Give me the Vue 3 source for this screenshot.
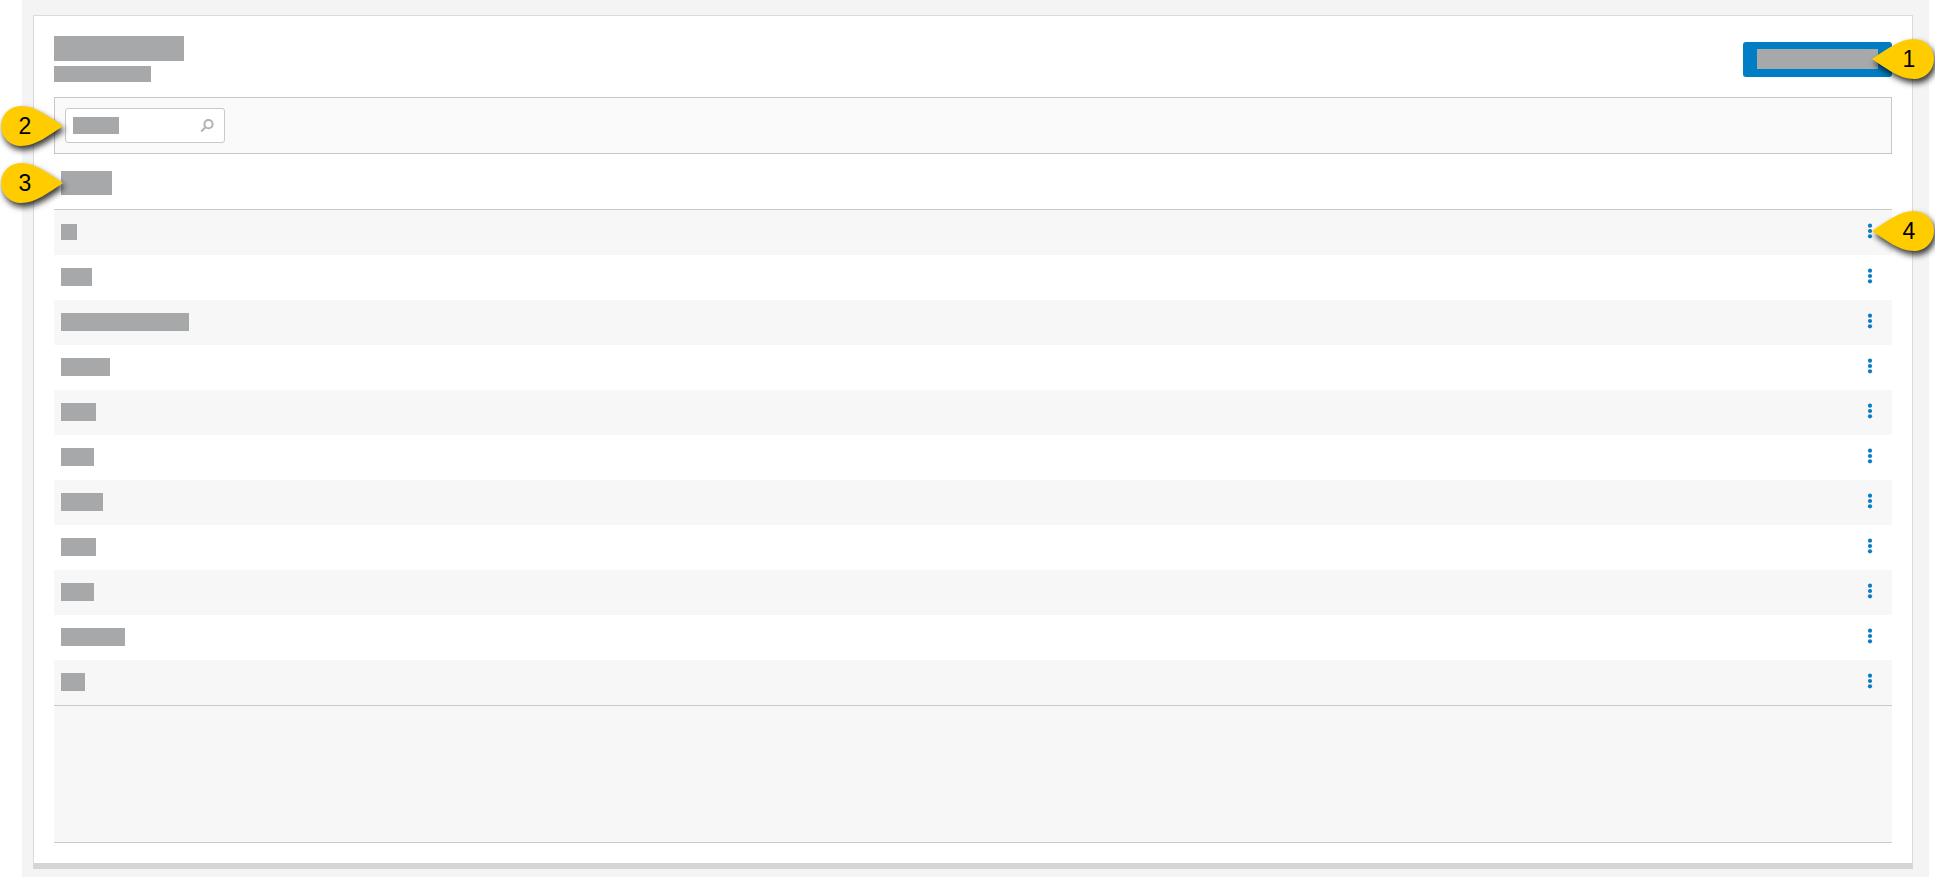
<script setup>
const rows = [16, 31, 128, 49, 35, 33, 42, 35, 33, 64, 24].map((width, i) => ({ id: i + 1, width }))
</script>

<template>
  <div class="page">
    <main class="panel">
      <header class="head">
        <div class="titles">
          <h1 class="block title" aria-label="Title"></h1>
          <p class="block subtitle"></p>
        </div>
        <div class="anchor">
          <button class="primary" type="button" aria-label="Create"><span class="block caption"></span></button>
          <div class="pin right">
            <svg viewBox="0 0 62 40" aria-hidden="true"><path d="M0 20C14 11 27 0 42 0A20 20 0 0 1 42 40C27 40 14 29 0 20Z" /></svg>
            <span>1</span>
          </div>
        </div>
      </header>

      <section class="toolbar">
        <div class="anchor">
          <label class="search">
            <span class="block hint"></span>
            <input type="search" aria-label="Search" />
            <svg class="lens" viewBox="0 0 14 14" aria-hidden="true"><circle cx="8.5" cy="5.2" r="4.1" /><path d="M5.6 8.1 1.2 12.5" /></svg>
          </label>
          <div class="pin left search-pin">
            <svg viewBox="0 0 62 40" aria-hidden="true"><path d="M62 20C48 11 35 0 20 0A20 20 0 0 0 20 40C35 40 48 29 62 20Z" /></svg>
            <span>2</span>
          </div>
        </div>
      </section>

      <table class="list">
        <thead>
          <tr>
            <th colspan="2">
              <div class="anchor">
                <div class="block column"></div>
                <div class="pin left column-pin">
                  <svg viewBox="0 0 62 40" aria-hidden="true"><path d="M62 20C48 11 35 0 20 0A20 20 0 0 0 20 40C35 40 48 29 62 20Z" /></svg>
                  <span>3</span>
                </div>
              </div>
            </th>
          </tr>
        </thead>
        <tbody>
          <tr v-for="row in rows" :key="row.id">
            <td><div class="block name" :style="{ width: row.width + 'px' }"></div></td>
            <td class="actions">
              <div class="anchor">
                <button class="more" type="button" aria-label="Row actions">
                  <svg viewBox="0 0 4 14" aria-hidden="true"><circle cx="2" cy="1.7" r="2.1" /><circle cx="2" cy="7" r="2.1" /><circle cx="2" cy="12.3" r="2.1" /></svg>
                </button>
                <div v-if="row.id === 1" class="pin right">
                  <svg viewBox="0 0 62 40" aria-hidden="true"><path d="M0 20C14 11 27 0 42 0A20 20 0 0 1 42 40C27 40 14 29 0 20Z" /></svg>
                  <span>4</span>
                </div>
              </div>
            </td>
          </tr>
        </tbody>
      </table>
      <div class="rest"></div>
    </main>
  </div>
</template>

<style>
body { background: #fff; }
</style>

<style scoped>
* { box-sizing: border-box; }
.page {
  display: flex;
  min-height: 100vh;
  margin: 0 6px 0 22px;
  padding: 15px 16px 8px 11px;
  background: #f4f4f4;
  font-family: "Liberation Sans", Arial, sans-serif;
}
.panel {
  display: flex;
  flex: 1;
  flex-direction: column;
  min-width: 0;
  padding: 20px;
  border: 1px solid #dbdbdb;
  border-bottom: 6px solid #d5d5d5;
  background: #fff;
}
.block { margin: 0; background: #a7a8aa; }
.anchor { position: relative; }
.head { display: flex; align-items: flex-start; justify-content: space-between; height: 61px; }
.title { width: 130px; height: 25px; }
.subtitle { width: 97px; height: 16px; margin-top: 5px; }
.head .anchor { margin-top: 6px; }
.primary {
  display: block;
  height: 35px;
  padding: 0 14px 1px;
  border: 0;
  border-radius: 3px;
  background: #007dc5;
}
.caption { display: block; width: 121px; height: 20px; }
.toolbar { display: flex; padding: 10px; border: 1px solid #c6c7c8; background: #fafafa; }
.search {
  display: flex;
  align-items: center;
  width: 160px;
  height: 35px;
  padding: 0 10px 0 7px;
  border: 1px solid #c8c9ca;
  border-radius: 3px;
  background: #fff;
}
.hint { width: 46px; height: 17px; }
.search input { flex: 1; min-width: 0; border: 0; outline: 0; background: none; font: inherit; }
.lens { width: 14px; height: 14px; fill: none; stroke: #b1b2b3; stroke-width: 2; }
.list { width: 100%; border-collapse: separate; border-spacing: 0; }
.list th { height: 56px; padding: 3px 0 0 7px; border-bottom: 1px solid #c9cacb; text-align: left; font-weight: 400; }
.column { width: 51px; height: 24px; }
.list td { height: 45px; padding: 0 0 1px 7px; }
.list tbody tr:nth-child(odd) { background: #f7f7f7; }
.name { height: 18px; }
.list tr:first-child .name { height: 16px; }
.list td.actions { width: 48px; padding: 0 15px 4px 19px; }
.more { display: block; width: 14px; height: 20px; padding: 3px 5px; border: 0; background: none; }
.more svg { display: block; width: 4px; height: 14px; overflow: visible; fill: #0b7bc4; }
.rest { flex: 1; border: solid #c9cacb; border-width: 1px 0; background: #f7f7f7; }
.pin {
  position: absolute;
  z-index: 2;
  display: flex;
  align-items: center;
  justify-content: center;
  width: 62px;
  height: 40px;
  color: #000;
  font-size: 23px;
  line-height: 40px;
}
.pin svg {
  position: absolute;
  inset: 0;
  width: 62px;
  height: 40px;
  overflow: visible;
  fill: #fc0;
  filter: drop-shadow(2px 4px 3px rgba(0, 0, 0, 0.8));
}
.pin span { position: relative; }
.pin.left { padding-right: 14px; }
.pin.right { padding-left: 12px; }
.head .pin { top: -3px; right: -42px; }
.search-pin { top: -2px; left: -64px; }
.column-pin { top: -8px; left: -60px; }
.actions .pin { top: -10px; right: -57px; }
</style>
